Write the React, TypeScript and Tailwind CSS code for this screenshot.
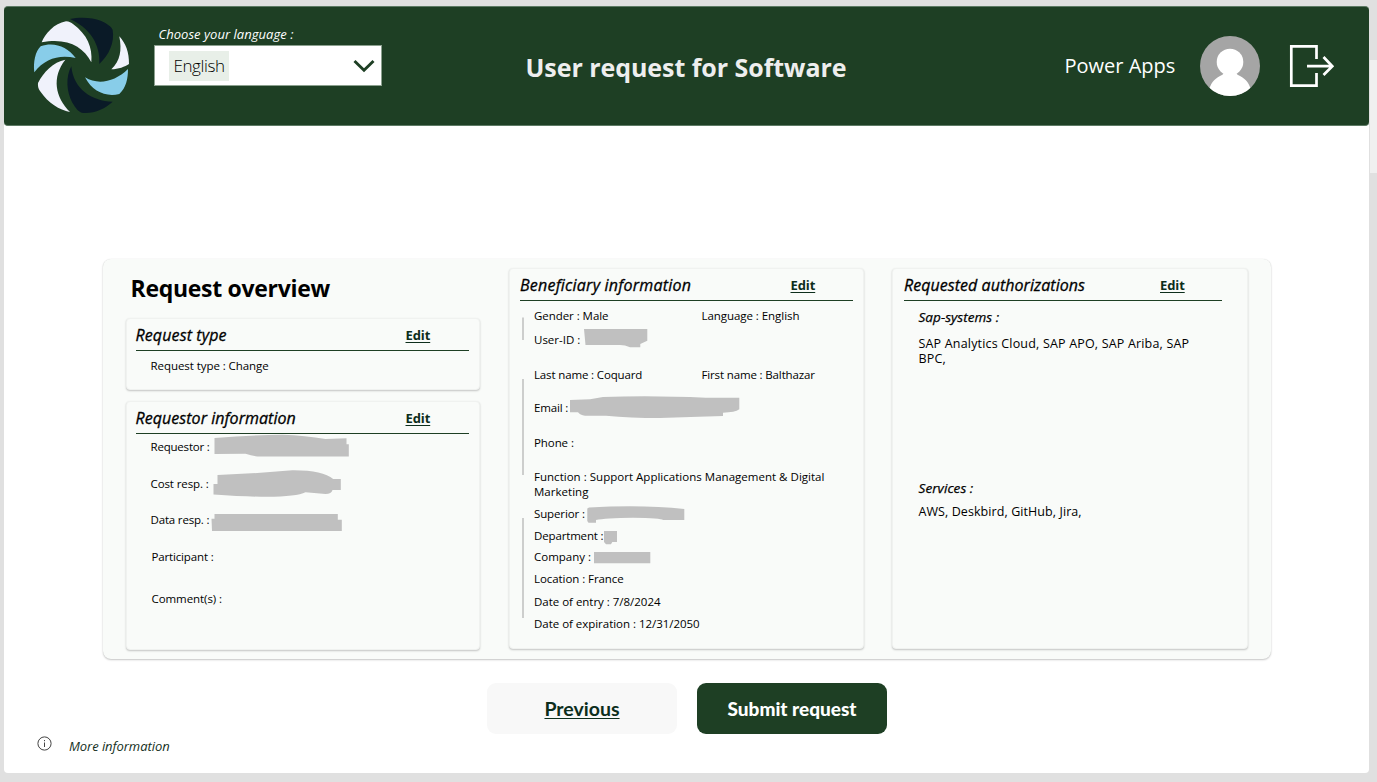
import React from "react";

function Logo() {
  return (
    <svg className="h-[104px] w-[104px] shrink-0" viewBox="0 0 312 312">
      <g fill="#0a1a27">
        <path d="M120 15C150 8 190 11 212 20C230 28 245 38 248 48C254 85 238 122 208 150C211 110 196 50 120 15Z" />
        <path d="M124 157C106 190 110 235 127 266C138 284 146 293 155 296C190 300 225 285 248 263C185 262 130 225 124 157Z" />
      </g>
      <g fill="#f0f2fb">
        <path d="M35 85C45 60 72 28 108 22C118 23 124 26 129 30C172 62 188 100 184 145C160 97 110 70 35 85Z" />
        <path d="M106 137C70 143 40 175 24 207C23 216 25 224 30 231C55 268 88 288 120 294C76 250 64 190 106 137Z" />
        <path d="M268 67C287 88 298 115 297 150C285 158 265 166 244 166C271 140 276 110 268 67Z" />
      </g>
      <g fill="#88cde9">
        <path d="M13 175C9 145 16 112 32 97C70 82 112 97 137 132C90 121 45 132 13 175Z" />
        <path d="M165 190C205 215 255 203 294 165C294 195 288 222 268 240C228 250 187 233 165 190Z" />
      </g>
    </svg>
  );
}

function Header() {
  return (
    <header className="flex h-[120px] items-start rounded-[4px] border-y border-[#5d7a64] bg-[#1e3f24] text-white">
      <div className="ml-[26px] mt-[7px]"><Logo /></div>
      <div className="ml-[19.5px] mt-[18px] w-[228px]">
        <div className="ml-[5px] h-[20px] whitespace-nowrap text-[13px] italic leading-[18px] tracking-[0.04px]">Choose your language :</div>
        <div className="flex h-[41px] items-center justify-between border border-[#8ba08e] bg-white">
          <span className="ml-[14px] h-[30px] w-[60px] bg-[#e8efe8] pl-[5px] text-[17px] font-light leading-[29px] tracking-[-0.4px] text-black">English</span>
          <svg className="mr-[6px] h-[14px] w-[22px]" viewBox="0 0 22 14" fill="none" stroke="#1e3f24" strokeWidth="2.9">
            <path d="M1.5 2L11 11.3L20.5 2" />
          </svg>
        </div>
      </div>
      <h1 className="ml-[144px] mt-[45px] w-[330px] whitespace-nowrap text-[25px] font-bold leading-[30px] tracking-[-0.05px] text-[#eeeeee]">User request for Software</h1>
      <div className="ml-[209px] mt-[44px] w-[135.500px] whitespace-nowrap text-[20px] leading-[30px]">Power Apps</div>
      <svg className="mt-[28.500px] h-[60px] w-[60px] shrink-0" viewBox="0 0 60 60">
        <clipPath id="face"><circle cx="30" cy="30" r="30" /></clipPath>
        <g clipPath="url(#face)">
          <rect width="60" height="60" fill="#a5a5a5" />
          <circle cx="30" cy="26" r="13.3" fill="#fff" />
          <path d="M24 36H36C36 38 38 39.3 40 40C46 43 50 48 51 55V62H9V55C10 48 14 43 20 40C22 39.3 24 38 24 36Z" fill="#fff" />
        </g>
      </svg>
      <svg className="ml-[29px] mt-[36.500px] h-[44px] w-[46px] shrink-0" viewBox="0 0 46 44" fill="none" stroke="#fff" strokeWidth="2.7">
        <path d="M27.5 15V2.3H2.3V41.7H27.5V29M18 22.2H43M34.5 13L43.3 22.2L34.5 31" />
      </svg>
    </header>
  );
}

function CardHead({ title, tracking, edit, line }: { title: string; tracking: string; edit: string; line: string }) {
  return (
    <div className={"flex h-[27px] border-b border-[#1e3f24] " + line}>
      <h3 className={"whitespace-nowrap text-[16px] font-medium italic leading-[22px] text-black [-webkit-text-stroke:0.3px_#000] " + edit + " " + tracking}>{title}</h3>
      <a className="h-[17px] text-[13px] font-bold leading-[22px] tracking-[-0.1px] text-[#0d2e1c] underline decoration-1 underline-offset-2">Edit</a>
    </div>
  );
}

const card = "relative rounded-[4px] border border-[#f0f2f0] bg-[#f9fbf9] shadow-[0_1px_2px_rgba(0,0,0,0.22)]";

function Row({ children, className }: { children: React.ReactNode; className: string }) {
  return <div className={"whitespace-nowrap text-[11.5px] leading-[16px] text-black " + className}>{children}</div>;
}

export default function App() {
  return (
    <div className="flex h-[782px] w-[1377px] bg-[#e0e0e0] font-['Open_Sans','Noto_Sans',sans-serif]">
      <div className="ml-[4px] mt-[6px] h-[767px] w-[1365px] shrink-0 rounded-[4px] bg-white">
        <Header />

        <main className="ml-[99px] mt-[133px] flex h-[400px] w-[1168px] rounded-[8px] bg-[#f9fbf9] shadow-[0_1px_2px_rgba(0,0,0,0.22),0_0_1px_rgba(0,0,0,0.12)]">
          <div className="ml-[22.5px] w-[354px] shrink-0">
            <h2 className="ml-[5px] mt-[14px] h-[45px] text-[23px] font-bold leading-[30px] tracking-[-0.3px] text-black">Request overview</h2>
            <section className={card + " h-[72px] pl-[9px] pt-[5px]"}>
              <CardHead title="Request type" tracking="tracking-[0.12px]" edit="w-[270px]" line="w-[333px]" />
              <Row className="ml-[15px] mt-[7px] tracking-[-0.06px]">Request type : Change</Row>
            </section>
            <section className={card + " mt-[11px] h-[249px] pl-[9px] pt-[5px]"}>
              <CardHead title="Requestor information" tracking="tracking-[0.05px]" edit="w-[270px]" line="w-[333px]" />
              <Row className="ml-[15px] mt-[5px] tracking-[-0.2px]">Requestor :</Row>
              <Row className="ml-[15px] mt-[21px] tracking-[-0.1px]">Cost resp. :</Row>
              <Row className="ml-[15px] mt-[20px] tracking-[-0.17px]">Data resp. :</Row>
              <Row className="ml-[16px] mt-[21px] tracking-[-0.15px]">Participant :</Row>
              <Row className="ml-[16px] mt-[26px] tracking-[-0.07px]">Comment(s) :</Row>
              <svg className="absolute -left-px -top-px h-[249px] w-[354px]" viewBox="125.5 401 354 249" fill="#c0c0c0">
                <path d="M214 438Q252 435 282 434.7Q305 435.5 325 439L346 438.3V444.3H348.3V456.5H260Q253 456.5 245 453.7L214 454Z" />
                <path d="M217 475Q255 473.5 291.7 470.3Q322 470 332.7 479H340.3V490H332Q331 494 325 494L305 492.3Q290 500 213 494.5V484H217Z" />
                <path d="M214 514H337.3V519.7H341.3V531H211.5L211 518.7H214Z" />
              </svg>
            </section>
          </div>

          <section className={card + " ml-[29.5px] mt-[9px] h-[381px] w-[355px] shrink-0 pl-[10px] pt-[5px]"}>
            <CardHead title="Beneficiary information" tracking="tracking-[0.22px]" edit="w-[270.5px]" line="w-[333px]" />
            <div className="ml-[14px]">
              <Row className="mt-[7px] flex tracking-[-0.05px]">
                <span className="w-[167.5px]">Gender : Male</span>
                <span>Language : English</span>
              </Row>
              <Row className="mt-[8px]">User-ID :</Row>
              <Row className="mt-[19px] flex tracking-[-0.14px]">
                <span className="w-[167.5px]">Last name : Coquard</span>
                <span>First name : Balthazar</span>
              </Row>
              <Row className="mt-[17px] tracking-[-0.15px]">Email :</Row>
              <Row className="mt-[19px] tracking-[-0.08px]">Phone :</Row>
              <div className="mt-[18px] w-[310px] text-[11.5px] leading-[15px] tracking-[0.02px] text-black">
                Function : Support Applications Management &amp; Digital<br />Marketing
              </div>
              <Row className="mt-[7px] tracking-[-0.12px]">Superior :</Row>
              <Row className="mt-[6px] tracking-[-0.15px]">Department :</Row>
              <Row className="mt-[5px]">Company :</Row>
              <Row className="mt-[6px] tracking-[-0.07px]">Location : France</Row>
              <Row className="mt-[7px] tracking-[-0.02px]">Date of entry : 7/8/2024</Row>
              <Row className="mt-[6px] tracking-[-0.03px]">Date of expiration : 12/31/2050</Row>
            </div>
            <svg className="absolute -left-px -top-px h-[381px] w-[355px]" viewBox="509 268 355 381" fill="#c0c0c0">
              <path d="M522 317.5h2v22.5h-2zM522 379h2v96h-2zM522 518h2v100h-2z" fill="#cdcecd" />
              <path d="M584 329H647.3V340.7L640.3 344V347.3H630Q625 345 620 345H585.5Z" />
              <path d="M570 400L590 399.3L603 397Q650 395 706 397.7H739.3V409.3Q735 412.5 723 412.7V416Q690 417 660 418Q630 418 606 415.7H585Q580 415 578 412.3H570Z" />
              <path d="M587.3 508.5L589 507.5Q643 504.5 684.3 509V520H663Q661 518 633 517.7Q605 518 596 520V522.7H588.5L587.3 521Z" />
              <path d="M604 531H617V542H612.3L611 544.3H606L604 542Z" />
              <path d="M594 552H650.3V563.3H594Z" />
            </svg>
          </section>

          <section className={card + " ml-[28px] mt-[9px] h-[381px] w-[355.500px] shrink-0 pl-[11px] pt-[5px]"}>
            <CardHead title="Requested authorizations" tracking="tracking-[0.05px]" edit="w-[256px]" line="w-[318px]" />
            <div className="ml-[14.5px] text-black">
              <h4 className="mt-[7px] text-[13.5px] font-medium italic leading-[18px] tracking-[0.05px] [-webkit-text-stroke:0.25px_#000]">Sap-systems :</h4>
              <p className="mt-[10px] h-[134px] text-[12.5px] leading-[15px] tracking-[0.18px]">SAP Analytics Cloud, SAP APO, SAP Ariba, SAP<br />BPC,</p>
              <h4 className="mt-[9px] text-[13.5px] font-medium italic leading-[18px] tracking-[0.08px] [-webkit-text-stroke:0.25px_#000]">Services :</h4>
              <p className="mt-[7px] text-[12.5px] leading-[15px] tracking-[0.08px]">AWS, Deskbird, GitHub, Jira,</p>
            </div>
          </section>
        </main>

        <div className="ml-[483px] mt-[24px] flex gap-[20px] font-['Lato',sans-serif]">
          <button className="h-[51px] w-[190px] rounded-[9px] bg-[#f8f8f8] text-[19.5px] font-bold text-[#0d2e1c] underline decoration-1 underline-offset-2">Previous</button>
          <button className="h-[51px] w-[190px] rounded-[9px] bg-[#1e3f24] pt-[2px] text-[19px] font-black text-white">Submit request</button>
        </div>

        <footer className="ml-[33px] flex h-[24px] items-center">
          <svg className="-mt-[5px] h-[15px] w-[15px]" viewBox="0 0 15 15" fill="none" stroke="#444">
            <circle cx="7.5" cy="7.5" r="6.6" />
            <path d="M7.500 6.500V11M7.500 4V5.200" />
          </svg>
          <span className="ml-[17px] text-[13px] italic leading-[18px] tracking-[-0.06px] text-[#14301c]">More information</span>
        </footer>
      </div>
      <div className="ml-px mt-[60px] h-[113px] w-[7px] bg-[#f0f0f0]" />
    </div>
  );
}
